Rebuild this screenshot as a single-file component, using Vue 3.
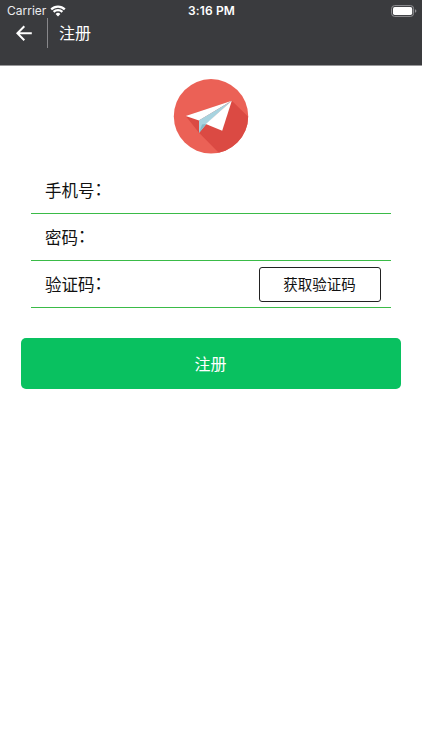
<script setup>
const fields = [
  { label: '手机号' },
  { label: '密码' },
  { label: '验证码', action: '获取验证码' },
]
</script>

<template>
  <div class="page">
    <header class="header">
      <div class="status">
        <div class="carrier">
          <span>Carrier</span>
          <svg class="wifi" viewBox="0 0 16 12" width="16" height="12">
            <path d="M1.2 4.4 A9.6 9.6 0 0 1 14.8 4.4" />
            <path d="M3.6 6.9 A6.3 6.3 0 0 1 12.4 6.9" />
            <path class="dot" d="M5.6 9 A3.5 3.5 0 0 1 10.4 9 L8 11.4 Z" />
          </svg>
        </div>
        <div class="time">3:16 PM</div>
        <div class="power">
          <svg viewBox="0 0 26 12" width="26" height="12">
            <rect x="0.6" y="0.6" width="22" height="10.8" rx="3" fill="none" stroke="#929295" stroke-width="1" />
            <rect x="2" y="2" width="19.2" height="8" rx="1.7" fill="#fff" />
            <path d="M24 4.2 Q25.4 4.7 25.4 6 Q25.4 7.3 24 7.8 Z" fill="#929295" />
          </svg>
        </div>
      </div>
      <nav class="nav">
        <svg class="back" viewBox="0 0 16 16" width="16" height="16">
          <path d="M15.8 8.2 H1.6 M8.3 1.2 L1.4 8.2 L8.3 15.2" />
        </svg>
        <span class="divider"></span>
        <h1 class="title">注册</h1>
      </nav>
    </header>

    <main class="content">
      <svg class="logo" viewBox="0 0 76 76" width="76" height="76">
        <defs>
          <clipPath id="disc"><circle cx="38" cy="38.3" r="37.2" /></clipPath>
        </defs>
        <circle cx="38" cy="38.3" r="37.2" fill="#eb6156" />
        <path clip-path="url(#disc)" d="M12.7 38 L58.8 22.7 L78 41.5 V78 H49 L26 54.7 Z" fill="#db4a43" />
        <path d="M58.8 22.7 L12.7 38 L26 42.5 Z" fill="#fff" />
        <path d="M58.8 22.7 L26 42.3 V54.9 L33.5 46 Z" fill="#a8d3df" />
        <path d="M33 46 L26 54.9 L29 46.5 Z" fill="#86b8c6" />
        <path d="M58.8 22.7 L32.8 46 L49.2 52.8 Z" fill="#fff" />
      </svg>

      <form class="form" @submit.prevent>
        <div v-for="field in fields" :key="field.label" class="field">
          <span class="label">{{ field.label }}<span class="colon">：</span></span>
          <button v-if="field.action" type="button" class="code">{{ field.action }}</button>
        </div>
        <button type="submit" class="submit">注册</button>
      </form>
    </main>
  </div>
</template>

<style>
body {
  margin: 0;
  background: #fff;
}
</style>

<style scoped>
.page {
  min-height: 750px;
  background: #fff;
  color: #111;
  font-family: "Noto Sans CJK SC", sans-serif;
}
.header {
  height: 66px;
  box-sizing: border-box;
  background: #3a3b3e;
  color: #fff;
  border-bottom: 1px solid #98989a;
}
.status {
  display: grid;
  grid-template-columns: 1fr auto 1fr;
  height: 17px;
  padding: 0 5px 0 7px;
  font-family: Inter, sans-serif;
  font-size: 12px;
  line-height: 22px;
}
.carrier {
  display: flex;
  gap: 4px;
  color: #ececee;
}
.wifi {
  margin-top: 5px;
  fill: none;
  stroke: #fff;
  stroke-width: 2.2;
}
.wifi .dot {
  fill: #fff;
  stroke: none;
}
.time {
  font-weight: 600;
  font-size: 12px;
  letter-spacing: 0.15px;
  margin-right: 1px;
}
.power {
  display: flex;
  justify-content: flex-end;
  padding-top: 5px;
}
.nav {
  display: flex;
  align-items: center;
  height: 32px;
  padding-left: 16px;
}
.back {
  fill: none;
  stroke: #fff;
  stroke-width: 2;
}
.divider {
  width: 1px;
  height: 30px;
  margin: 0 11px 0 15px;
  background: #88888b;
}
.title {
  margin: 0;
  padding-bottom: 2px;
  font-size: 16px;
  font-weight: 400;
  line-height: 30px;
}
.content {
  display: flex;
  flex-direction: column;
  padding: 12px 21px 0;
}
.logo {
  align-self: center;
}
.form {
  display: flex;
  flex-direction: column;
  padding-top: 13px;
}
.field {
  display: flex;
  align-items: center;
  justify-content: space-between;
  box-sizing: border-box;
  height: 47px;
  margin: 0 10px;
  padding: 0 10px 0 14px;
  border-bottom: 1px solid #3abb47;
}
.label {
  display: flex;
  font-size: 16.5px;
  line-height: 24px;
}
.colon {
  margin-top: -2px;
}
.code {
  box-sizing: border-box;
  width: 122px;
  height: 35px;
  padding: 0 1px 2px 0;
  border: 1px solid #222;
  border-radius: 3px;
  background: #fff;
  color: #111;
  font: 14.5px/31px "Noto Sans CJK SC", sans-serif;
}
.submit {
  height: 51px;
  margin-top: 30px;
  padding: 0 1px 0 0;
  border: 0;
  border-radius: 5px;
  background: #09c160;
  color: #fff;
  font: 16px/51px "Noto Sans CJK SC", sans-serif;
}
</style>
